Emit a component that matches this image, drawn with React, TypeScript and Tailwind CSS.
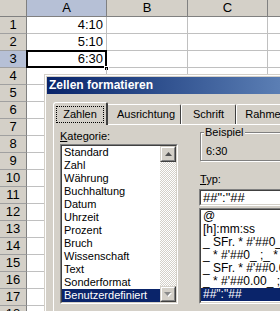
import React from "react";

const ROWS = Array.from({ length: 18 }, (_, i) => i + 1);
const VALUES: Record<number, string> = { 1: "4:10", 2: "5:10", 3: "6:30" };

const KATEGORIEN = [
  "Standard",
  "Zahl",
  "Währung",
  "Buchhaltung",
  "Datum",
  "Uhrzeit",
  "Prozent",
  "Bruch",
  "Wissenschaft",
  "Text",
  "Sonderformat",
  "Benutzerdefiniert",
];

const TYPEN = [
  "@",
  "[h]:mm:ss",
  "_ SFr. * #'##0_ ;_ SFr. * -#'##0_ ;",
  "_ * #'##0_ ;_ * -#'##0_ ;_ * \"-\"_ ;",
  "_ SFr. * #'##0.00_ ;_ SFr. * -#'##0.00_ ;",
  "_ * #'##0.00_ ;_ * -#'##0.00_ ;",
  '##":"##',
];

function Sunken({ className, children }: { className: string; children: React.ReactNode }) {
  return (
    <div className={`border border-t-[#808080] border-l-[#808080] border-b-white border-r-white ${className}`}>
      <div className="h-full w-full border border-t-[#404040] border-l-[#404040] border-b-[#d4d0c8] border-r-[#d4d0c8] bg-white overflow-hidden">
        {children}
      </div>
    </div>
  );
}

function ScrollButton({ dir }: { dir: "up" | "down" }) {
  return (
    <div className="w-[16px] h-[16px] border border-t-[#d4d0c8] border-l-[#d4d0c8] border-b-[#404040] border-r-[#404040] bg-[#d4d0c8]">
      <div className="h-full w-full border border-t-white border-l-white border-b-[#808080] border-r-[#808080] flex items-center justify-center">
        {dir === "up" ? (
          <svg width="7" height="4" viewBox="0 0 7 4">
            <path d="M3.5 0 L7 4 L0 4 Z" fill="#505050" />
          </svg>
        ) : (
          <svg width="8" height="5" viewBox="0 0 8 5">
            <path d="M1 1 L8 1 L4.5 5 Z" fill="#ffffff" />
            <path d="M0 0 L7 0 L3.5 4 Z" fill="#8a8a8a" />
          </svg>
        )}
      </div>
    </div>
  );
}

function Sheet() {
  const cell = "h-[17px] border-r border-b border-[#c0c0c0] text-[13px] leading-[16px] px-[3px] overflow-hidden whitespace-nowrap";
  const head = "h-[17px] border-r border-b border-[#808080] text-[13px] leading-[16px] text-center";
  return (
    <div className="w-[280px]">
      <div className="grid grid-cols-[27px_80px_81px_80px_1fr]">
        <div className={`${head} bg-[#d4d0c8]`} />
        <div className={`${head} bg-[#b6c0d6]`}>A</div>
        <div className={`${head} bg-[#d4d0c8]`}>B</div>
        <div className={`${head} bg-[#d4d0c8]`}>C</div>
        <div className={`${head} bg-[#d4d0c8] border-r-0`} />
      </div>
      {ROWS.map((r) => (
        <div key={r} className="grid grid-cols-[27px_80px_81px_80px_1fr]">
          <div className={`${head} border-b-[#a0a0a0] ${r === 3 ? "bg-[#b6c0d6]" : "bg-[#d4d0c8]"}`}>{r}</div>
          <div className={`${cell} text-right relative overflow-visible`}>
            {VALUES[r]}
            {r === 3 && (
              <>
                <div className="absolute left-[-1px] top-[-1px] w-[81px] h-[18px] border-2 border-black pointer-events-none" />
                <div className="absolute right-[-3px] bottom-[-4px] w-[5px] h-[5px] bg-black border border-white" />
              </>
            )}
          </div>
          <div className={cell} />
          <div className={cell} />
          <div className={`${cell} border-r-0`} />
        </div>
      ))}
    </div>
  );
}

function Dialog() {
  return (
    <div className="absolute left-[44px] top-[74px] w-[420px] h-[260px] border-t border-l border-[#d4d0c8] bg-[#d4d0c8]">
      <div className="h-full border-t border-l border-white pt-[1px] pl-[1px]">
        <div className="h-[17px] bg-gradient-to-r from-[#0a246a] to-[#a6caf0] text-white font-bold text-[12px] leading-[17px] pl-[2px]">
          Zellen formatieren
        </div>
        <div className="pl-[6px] pt-[8px]">
          {/* tabs */}
          <div className="flex items-end h-[22px] text-[11px] relative z-10">
            <div className="w-[55px] h-[23px] border-t border-l border-white border-r-2 border-r-[#404040] rounded-tl-[3px] rounded-tr-[2px] bg-[#d4d0c8] flex items-start justify-center pt-[3px] -mb-[1px]">
              <span className="border border-dotted border-black px-[6px] leading-[15px]">Zahlen</span>
            </div>
            <div className="w-[73px] h-[20px] border-t border-white border-r border-r-[#404040] rounded-tr-[2px] flex items-center justify-center leading-[13px] pl-[4px]">
              Ausrichtung
            </div>
            <div className="w-[55px] h-[20px] border-t border-l border-white border-r border-r-[#404040] rounded-t-[2px] flex items-center justify-center leading-[13px]">
              Schrift
            </div>
            <div className="w-[60px] h-[20px] border-t border-l border-white border-r border-r-[#404040] rounded-t-[2px] flex items-center justify-center leading-[13px]">
              Rahmen
            </div>
          </div>
          {/* panel */}
          <div className="border-t border-l border-white h-[200px] pl-[6px] flex gap-[21px] text-[11px] leading-[13px]">
            <div className="w-[118px]">
              <div className="mt-[5px] h-[13px]">
                <span className="underline">K</span>ategorie:
              </div>
              <Sunken className="mt-[1px] h-[160px]">
                <div className="flex h-full">
                  <div className="flex-1 flex flex-col justify-start">
                    {KATEGORIEN.map((k) => (
                      <div
                        key={k}
                        className={`h-[13px] pl-[2px] whitespace-nowrap overflow-hidden ${
                          k === "Benutzerdefiniert" ? "bg-[#0a246a] text-white" : ""
                        }`}
                      >
                        {k}
                      </div>
                    ))}
                  </div>
                  <div className="w-[16px] flex flex-col">
                    <ScrollButton dir="up" />
                    <div className="flex-1 bg-[conic-gradient(#d4d0c8_25%,#ffffff_0_50%,#d4d0c8_0_75%,#ffffff_0)] bg-[length:2px_2px]" />
                    <ScrollButton dir="down" />
                  </div>
                </div>
              </Sunken>
            </div>
            <div className="w-[200px]">
              <div className="relative mt-[7px] ml-[1px] h-[29px] border border-[#808080] shadow-[inset_1px_1px_0_#ffffff,1px_1px_0_#ffffff]">
                <div className="absolute left-[3px] top-[-7px] bg-[#d4d0c8] px-[1px] leading-[13px]">Beispiel</div>
                <div className="pl-[5px] pt-[12px] leading-[13px]">6:30</div>
              </div>
              <div className="mt-[12px] ml-[1px] h-[13px]">
                <span className="underline">T</span>yp:
              </div>
              <Sunken className="mt-[3px] h-[17px]">
                <div className="pl-[2px] text-[13px] leading-[14px] whitespace-nowrap">##":"##</div>
              </Sunken>
              <Sunken className="mt-[2px] h-[96px]">
                <div className="flex flex-col text-[12px]">
                  {TYPEN.map((t, i) => (
                    <div
                      key={i}
                      className={`h-[13px] leading-[13px] pl-[2px] whitespace-pre overflow-hidden ${
                        i === TYPEN.length - 1 ? "bg-[#0a246a] text-white" : ""
                      }`}
                    >
                      {t}
                    </div>
                  ))}
                </div>
              </Sunken>
            </div>
          </div>
        </div>
      </div>
    </div>
  );
}

export default function App() {
  return (
    <div className="relative w-[280px] h-[311px] overflow-hidden bg-white text-black font-['Liberation_Sans',Arial,sans-serif]">
      <Sheet />
      <Dialog />
    </div>
  );
}
